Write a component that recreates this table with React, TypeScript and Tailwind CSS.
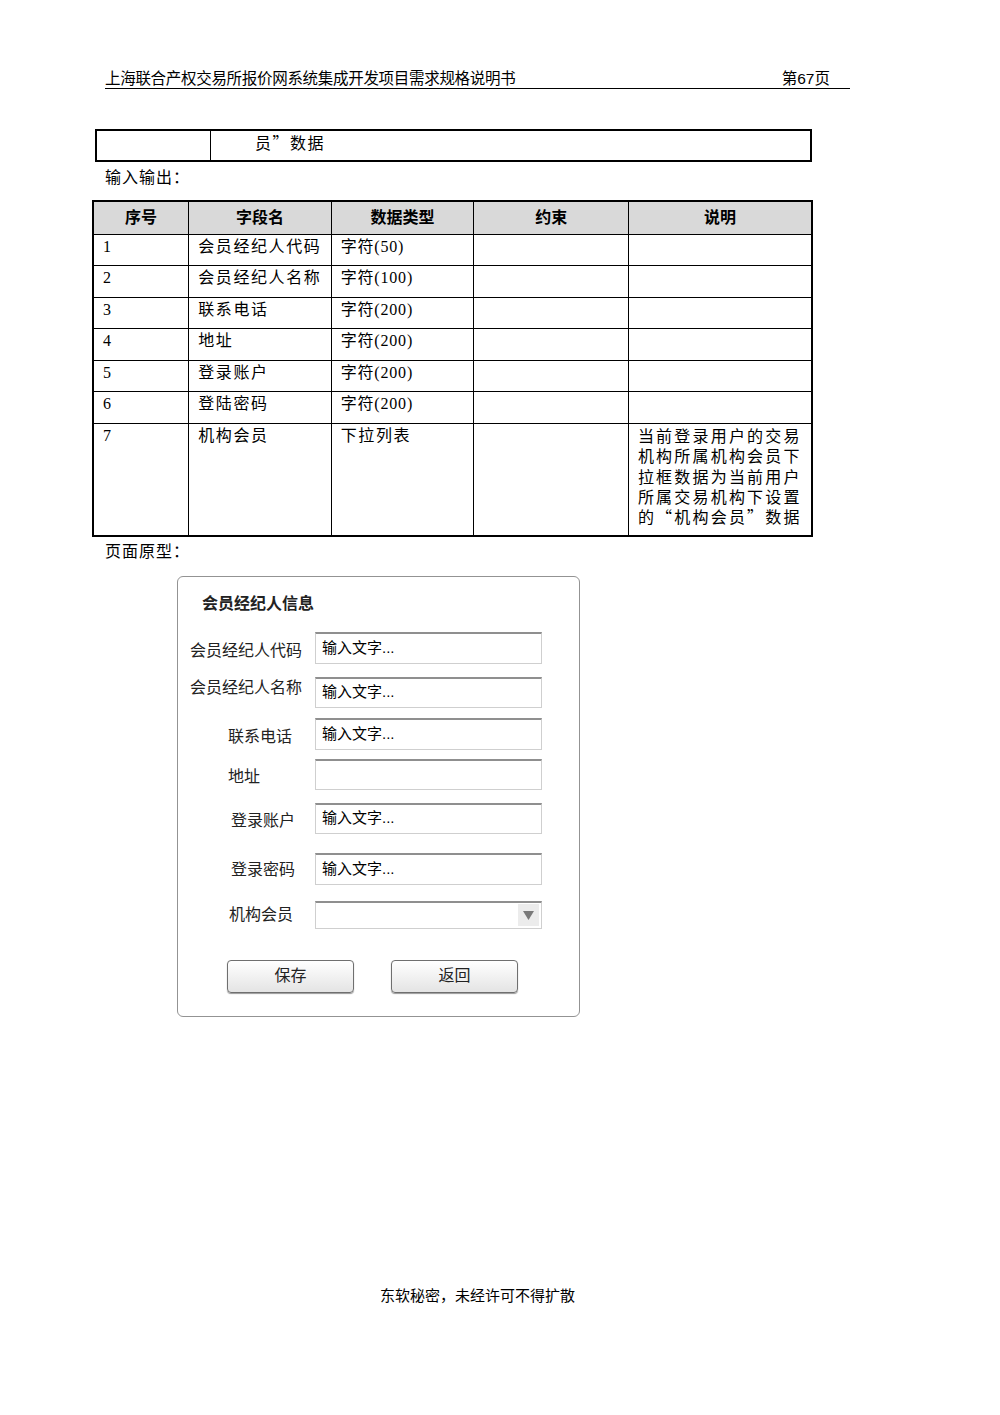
import React from "react";

const serif = "font-['Liberation_Serif','Noto_Sans_CJK_SC',serif]";
const sans = "font-['Liberation_Sans','Noto_Sans_CJK_SC',sans-serif]";
const cjk = "font-['Noto_Sans_CJK_SC',sans-serif]";

const rows = [
  ["1", "会员经纪人代码", "字符(50)"],
  ["2", "会员经纪人名称", "字符(100)"],
  ["3", "联系电话", "字符(200)"],
  ["4", "地址", "字符(200)"],
  ["5", "登录账户", "字符(200)"],
  ["6", "登陆密码", "字符(200)"],
];

const fields = [
  { label: "会员经纪人代码", mt: "mt-[55px]", h: "h-[32px]", pl: "pl-[12px]", dy: "pt-[8px]", ph: true },
  { label: "会员经纪人名称", mt: "mt-[13px]", h: "h-[31px]", pl: "pl-[12px]", dy: "pb-[3px]", ph: true },
  { label: "联系电话", mt: "mt-[10px]", h: "h-[32px]", pl: "pl-[50px]", dy: "pt-[8px]", ph: true },
  { label: "地址", mt: "mt-[9px]", h: "h-[31px]", pl: "pl-[50px]", dy: "pt-[7px]", ph: false },
  { label: "登录账户", mt: "mt-[13px]", h: "h-[31px]", pl: "pl-[53px]", dy: "pt-[7px]", ph: true },
  { label: "登录密码", mt: "mt-[19px]", h: "h-[32px]", pl: "pl-[53px]", dy: "pt-[6px]", ph: true },
];

export default function App() {
  return (
    <div className={`w-[1000px] h-[1415px] bg-white text-black flex flex-col ${sans}`}>
      {/* page header */}
      <div className="ml-[105px] mt-[70px] w-[745px] flex justify-between items-end border-b-[1.5px] border-black pb-[0px] text-[15.5px] leading-[18px]">
        <span className="tracking-[-0.3px]">上海联合产权交易所报价网系统集成开发项目需求规格说明书</span>
        <span className="mr-[20px]">第67页</span>
      </div>

      {/* tail of previous table */}
      <div className="ml-[95px] mt-[40px] w-[717px] h-[33px] border-2 border-black flex">
        <div className="w-[114px] border-r border-black" />
        <div className={`pl-[44px] text-[16px] leading-[22px] tracking-[1.5px] ${cjk}`}>员”数据</div>
      </div>

      <div className={`ml-[105px] h-[38px] pt-[5px] leading-[22px] text-[16px] tracking-[1px] ${serif}`}>输入输出：</div>

      {/* field table */}
      <table className={`ml-[92px] w-[721px] border-collapse border-2 border-black text-[16px] ${serif}`}>
        <colgroup>
          <col className="w-[96px]" />
          <col className="w-[143px]" />
          <col className="w-[143px]" />
          <col className="w-[155px]" />
          <col className="w-[184px]" />
        </colgroup>
        <thead>
          <tr className="h-[33px] bg-[#d9d9d9]">
            {["序号", "字段名", "数据类型", "约束", "说明"].map(h => (
              <th key={h} className={`border border-black font-bold text-center align-middle ${sans}`}>{h}</th>
            ))}
          </tr>
        </thead>
        <tbody>
          {rows.map(r => (
            <tr key={r[0]} className="h-[31.6px]">
              <td className="border border-black pl-[9px] align-top pt-[1px] leading-[22px]">{r[0]}</td>
              <td className="border border-black pl-[9px] align-top pt-[1px] leading-[22px] tracking-[1.6px]">{r[1]}</td>
              <td className="border border-black pl-[9px] align-top pt-[1px] leading-[22px] tracking-[0.8px]">{r[2]}</td>
              <td className="border border-black" />
              <td className="border border-black" />
            </tr>
          ))}
          <tr className="h-[112px]">
            <td className="border border-black pl-[9px] align-top pt-[1px] leading-[22px]">7</td>
            <td className="border border-black pl-[9px] align-top pt-[1px] leading-[22px] tracking-[1.6px]">机构会员</td>
            <td className="border border-black pl-[9px] align-top pt-[1px] leading-[22px] tracking-[1.6px]">下拉列表</td>
            <td className="border border-black" />
            <td className={`border border-black pl-[9px] pr-[2px] align-top pt-[1px] leading-[20.3px] tracking-[2.2px] ${cjk}`}>
              当前登录用户的交易机构所属机构会员下拉框数据为当前用户所属交易机构下设置的“机构会员”数据
            </td>
          </tr>
        </tbody>
      </table>

      <div className={`ml-[105px] h-[31px] pt-[4px] leading-[22px] text-[16px] tracking-[1px] ${serif}`}>页面原型：</div>

      {/* prototype panel */}
      <div className="ml-[177px] mt-[8px] w-[403px] h-[441px] border border-[#939393] rounded-[6px] flex flex-col text-[16px] text-[#222]">
        <div className="ml-[24px] mt-[16px] h-[22px] leading-[22px] font-bold text-[16px] -mb-[38px]">会员经纪人信息</div>
        {fields.map(f => (
          <div key={f.label} className={`flex ${f.mt} ${f.h}`}>
            <div className={`w-[137px] ${f.pl} ${f.dy} leading-[22px] whitespace-nowrap`}>{f.label}</div>
            <div className="w-[227px] h-full border border-[#cfcfcf] border-t-2 border-t-[#8f8f8f] bg-white pl-[6px] flex items-center text-black text-[15px]">
              {f.ph ? "输入文字..." : ""}
            </div>
          </div>
        ))}
        <div className="flex mt-[16px] h-[28px]">
          <div className="w-[137px] pl-[51px] pt-[3px] leading-[22px]">机构会员</div>
          <div className="w-[227px] h-full border border-[#cfcfcf] border-t-2 border-t-[#8f8f8f] bg-white flex justify-end items-center pr-[2px]">
            <div className="w-[21px] h-[22px] bg-[#ececec] flex items-center justify-center">
              <svg width="11" height="9" viewBox="0 0 11 9"><path d="M0 0 L11 0 L5.5 9 Z" fill="#7a7a7a" /></svg>
            </div>
          </div>
        </div>
        <div className="flex mt-[31px] ml-[49px] gap-[37px]">
          {["保存", "返回"].map(b => (
            <div key={b} className="w-[127px] h-[33px] border border-[#6f6f6f] rounded-[4px] bg-gradient-to-b from-white to-[#e4e4e4] shadow-[0_1px_1px_#999] flex items-center justify-center text-[16px]">
              {b}
            </div>
          ))}
        </div>
      </div>

      {/* footer */}
      <div className="ml-[380px] mt-[269px] text-[15px] leading-[20px]">东软秘密，未经许可不得扩散</div>
    </div>
  );
}
